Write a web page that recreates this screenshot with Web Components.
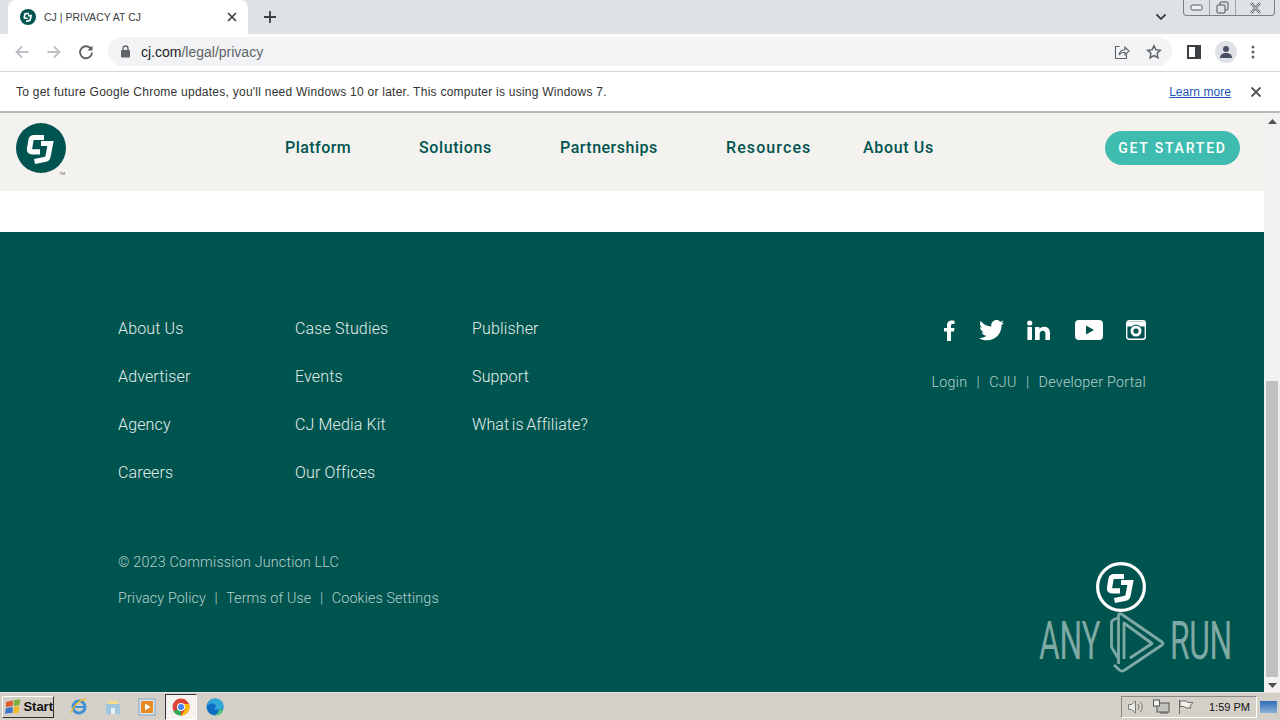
<!DOCTYPE html>
<html lang="en">
<head>
<meta charset="utf-8">
<title>CJ | PRIVACY AT CJ</title>
<style>
html, body { margin: 0; height: 100%; overflow: hidden; }
body { display: flex; flex-direction: column; width: 1280px; height: 720px; font-family: "Roboto", "Liberation Sans", sans-serif; }
.viewport { flex: 1; display: flex; min-height: 0; }
.page { flex: 1; display: flex; flex-direction: column; position: relative; min-width: 0; }
</style>
</head>
<body>
<browser-tabs></browser-tabs>
<browser-toolbar></browser-toolbar>
<update-bar></update-bar>
<div class="viewport">
  <div class="page">
    <cj-header></cj-header>
    <cj-footer></cj-footer>
    <anyrun-mark></anyrun-mark>
  </div>
  <page-scrollbar></page-scrollbar>
</div>
<win-taskbar></win-taskbar>

<script>
const cjGlyph = `<path d="M28 14.500H18Q15.500 14.500 15 17L13.500 26Q13 28.800 16 28.800H24" fill="none" stroke="currentColor" stroke-width="5.200"/>
  <path d="M25 20.500H34.500L32 33.500Q31.500 36 28.500 36.500L18.500 38.500" fill="none" stroke="currentColor" stroke-width="5.200"/>`

customElements.define('cj-logo', class extends HTMLElement {
  constructor() {
    super()
    const mode = this.getAttribute('variant')
    const circle = mode === 'outline'
      ? '<circle cx="25" cy="25" r="23.4" fill="#00544f" stroke="#fff" stroke-width="3.2"/>'
      : '<circle cx="25" cy="25" r="25" fill="#00544f"/>'
    this.attachShadow({ mode: 'open' }).innerHTML = `
      <style>
        :host { display: block; width: var(--size, 50px); height: var(--size, 50px); color: #fff; }
        svg { display: block; width: 100%; height: 100%; }
      </style>
      <svg viewBox="0 0 50 50">${circle}${cjGlyph}</svg>`
  }
})

customElements.define('browser-tabs', class extends HTMLElement {
  constructor() {
    super()
    this.attachShadow({ mode: 'open' }).innerHTML = `
      <style>
        :host { display: flex; height: 34px; background: #dee1e6; align-items: flex-end; font: 10.5px "Liberation Sans", sans-serif; color: #3c4043; position: relative; flex: none; }
        .tab { width: 240px; margin-left: 8px; height: 34px; background: #fff; border-radius: 8px 8px 0 0; display: flex; align-items: center; box-sizing: border-box; padding: 0 10px 0 12px; }
        .tab cj-logo { --size: 16px; margin-right: 8px; }
        .title { flex: 1; }
        .plus { width: 44px; height: 34px; display: grid; place-items: center; }
        .spacer { flex: 1; }
        .chev { width: 38px; height: 34px; display: grid; place-items: center; margin-right: 100px; }
        .win { position: absolute; right: 5px; top: 0; width: 92px; height: 16px; border: 1px solid #7a7f87; border-top: 0; border-radius: 0 0 4px 4px; display: flex; box-sizing: border-box; color: #50555c; }
        .win span { display: grid; place-items: center; border-right: 1px solid #9da1a8; height: 100%; }
        .win span:nth-child(1) { width: 25px; } .win span:nth-child(2) { width: 25px; }
        .win span:nth-child(3) { flex: 1; border: 0; }
      </style>
      <div class="tab">
        <cj-logo></cj-logo>
        <span class="title">CJ | PRIVACY AT CJ</span>
        <svg width="12" height="12" viewBox="0 0 12 12"><path d="M2 2l8 8M10 2l-8 8" stroke="#3c4043" stroke-width="1.7"/></svg>
      </div>
      <div class="plus"><svg width="14" height="14" viewBox="0 0 14 14"><path d="M7 1v12M1 7h12" stroke="#3c4043" stroke-width="1.8"/></svg></div>
      <div class="spacer"></div>
      <div class="chev"><svg width="12" height="8" viewBox="0 0 12 8"><path d="M1.5 1.5L6 6l4.5-4.5" fill="none" stroke="#3c4043" stroke-width="1.8"/></svg></div>
      <div class="win">
        <span><svg width="13" height="7" viewBox="0 0 13 7"><rect x="1" y="1" width="11" height="5" rx="1.5" fill="#eef0f2" stroke="#555"/></svg></span>
        <span><svg width="13" height="13" viewBox="0 0 13 13"><rect x="4" y="1" width="8" height="8" rx="1" fill="none" stroke="#555"/><rect x="1" y="4" width="8" height="8" rx="1" fill="#dee1e6" stroke="#555"/></svg></span>
        <span><svg width="13" height="12" viewBox="0 0 13 12"><path d="M2 1l9 10M11 1L2 11" stroke="#555" stroke-width="2.4"/><path d="M2 1l9 10M11 1L2 11" stroke="#eef0f2" stroke-width="1"/></svg></span>
      </div>`
  }
})

customElements.define('browser-toolbar', class extends HTMLElement {
  constructor() {
    super()
    this.attachShadow({ mode: 'open' }).innerHTML = `
      <style>
        :host { display: flex; align-items: center; height: 38px; box-sizing: border-box; background: #fff; border-bottom: 1px solid #d5d7da; flex: none; padding-bottom: 2px; }
        .nav { display: flex; align-items: center; gap: 16px; padding-left: 14px; width: 108px; box-sizing: border-box; flex: none; }
        .omni { width: 1064px; height: 29px; flex: none; border-radius: 15px; background: #f1f3f4; display: flex; align-items: center; padding: 0 10px 0 12px; box-sizing: border-box; gap: 10px; }
        .url { flex: 1; font: 14px "Liberation Sans", sans-serif; color: #5f6368; }
        .url b { font-weight: normal; color: #202124; }
        .omni-icons { display: flex; gap: 16px; align-items: center; }
        .right { flex: 1; display: flex; align-items: center; gap: 14px; padding-left: 15px; }
        .avatar { width: 22px; height: 22px; border-radius: 50%; background: #dee1e6; display: grid; place-items: center; }
      </style>
      <div class="nav">
        <svg width="16" height="16" viewBox="0 0 16 16"><path d="M14.5 8H2.5M8 2.5L2.5 8 8 13.5" fill="none" stroke="#bcc0c4" stroke-width="1.8"/></svg>
        <svg width="16" height="16" viewBox="0 0 16 16"><path d="M1.5 8h12M8 2.5L13.5 8 8 13.5" fill="none" stroke="#bcc0c4" stroke-width="1.8"/></svg>
        <svg width="16" height="16" viewBox="0 0 16 16"><path d="M13.2 5.2A6 6 0 1 0 14 8.5" fill="none" stroke="#5f6368" stroke-width="1.9"/><path d="M14.5 1.5v5h-5z" fill="#5f6368"/></svg>
      </div>
      <div class="omni">
        <svg width="11" height="13" viewBox="0 0 11 13"><rect x="1" y="5" width="9" height="7.5" rx="1" fill="#5f6368"/><path d="M3 5V3.5a2.5 2.5 0 0 1 5 0V5" fill="none" stroke="#5f6368" stroke-width="1.4"/></svg>
        <span class="url"><b>cj.com</b>/legal/privacy</span>
        <div class="omni-icons">
          <svg width="16" height="16" viewBox="0 0 16 16"><path d="M5.500 2.500H1.500v12h11v-4" fill="none" stroke="#5f6368" stroke-width="1.1"/><path d="M5 11C5.500 7.500 8 5.700 11 5.700V3l4 4-4 4V8.300C8.500 8.300 6.500 9 5 11z" fill="none" stroke="#5f6368" stroke-width="1.1"/></svg>
          <svg width="16" height="16" viewBox="0 0 16 16"><path d="M8 1.800l1.900 4 4.400.5-3.200 3 .8 4.400L8 11.500l-3.900 2.200.8-4.400-3.200-3 4.400-.5z" fill="none" stroke="#5f6368" stroke-width="1.500"/></svg>
        </div>
      </div>
      <div class="right">
        <svg width="14" height="14" viewBox="0 0 14 14"><rect x="1" y="1" width="12" height="12" fill="none" stroke="#3c4043" stroke-width="2"/><rect x="8" y="1" width="5" height="12" fill="#3c4043"/></svg>
        <div class="avatar"><svg width="14" height="14" viewBox="0 0 14 14"><circle cx="7" cy="4" r="3" fill="#4a5068"/><path d="M1 13c0-3.500 2.500-5 6-5s6 1.500 6 5z" fill="#4a5068"/></svg></div>
        <svg width="4" height="14" viewBox="0 0 4 14"><circle cx="2" cy="2" r="1.500" fill="#5f6368"/><circle cx="2" cy="7" r="1.500" fill="#5f6368"/><circle cx="2" cy="12" r="1.500" fill="#5f6368"/></svg>
      </div>`
  }
})

customElements.define('update-bar', class extends HTMLElement {
  constructor() {
    super()
    this.attachShadow({ mode: 'open' }).innerHTML = `
      <style>
        :host { display: flex; align-items: center; height: 41px; box-sizing: border-box; background: #fff; border-bottom: 2px solid #b8b8b4; padding: 0 18px 0 16px; font: 12px "Liberation Sans", sans-serif; color: #333; flex: none; }
        .msg { flex: 1; letter-spacing: 0.25px; }
        a { color: #1a56b8; text-decoration: underline; margin-right: 19px; letter-spacing: 0.05px; }
      </style>
      <span class="msg">To get future Google Chrome updates, you'll need Windows 10 or later. This computer is using Windows 7.</span>
      <a href="#">Learn more</a>
      <svg width="12" height="12" viewBox="0 0 12 12"><path d="M1.500 1.500l9 9M10.500 1.500l-9 9" stroke="#555" stroke-width="1.800"/></svg>`
  }
})

customElements.define('cj-header', class extends HTMLElement {
  constructor() {
    super()
    this.attachShadow({ mode: 'open' }).innerHTML = `
      <style>
        :host { display: block; flex: none; background: #fff; padding-bottom: 41px; }
        .bar { height: 78px; box-sizing: border-box; background: #f4f2ef; display: flex; align-items: flex-start; padding: 10px 24px 0 16px; position: relative; }
        .logo { position: relative; width: 50px; }
        .tm { position: absolute; right: 1px; bottom: -3px; font: 4px "Liberation Sans", sans-serif; color: #555; }
        nav { display: flex; margin-left: 219px; padding-top: 15px; font: 500 16px/20px "Roboto", sans-serif; color: #00544f; letter-spacing: 0.5px; flex: 1; }
        nav span:nth-child(1) { width: 134px; letter-spacing: 0.45px; } nav span:nth-child(2) { width: 141px; letter-spacing: 0.6px; }
        nav span:nth-child(3) { width: 166px; } nav span:nth-child(4) { width: 137px; letter-spacing: 1.1px; }
        nav span:nth-child(5) { letter-spacing: 0.65px; }
        .cta { margin-top: 8px; width: 135px; height: 34px; border-radius: 17px; background: #3fbcb0; color: #fff; font: 500 14px/34px "Roboto", sans-serif; letter-spacing: 1.8px; text-align: center; }
      </style>
      <div class="bar">
        <div class="logo"><cj-logo></cj-logo><span class="tm">TM</span></div>
        <nav><span>Platform</span><span>Solutions</span><span>Partnerships</span><span>Resources</span><span>About Us</span></nav>
        <div class="cta">GET STARTED</div>
      </div>`
  }
})

customElements.define('cj-footer', class extends HTMLElement {
  constructor() {
    super()
    this.attachShadow({ mode: 'open' }).innerHTML = `
      <style>
        :host { display: flex; flex: 1; background: #00544f; color: #e4eeec; font: 300 16px/20px "Roboto", sans-serif; padding: 87px 118px 0; justify-content: space-between; box-sizing: border-box; min-height: 0; }
        .links { display: grid; grid-template-columns: 177px 177px auto; row-gap: 28px; letter-spacing: 0.15px; }
        .tight { word-spacing: -1.5px; letter-spacing: 0.1px; }
        .legal { margin-top: 69px; font-size: 14.3px; letter-spacing: 0.12px; color: #b5d0cc; display: flex; flex-direction: column; gap: 16px; }
        .legal .first { letter-spacing: 0.2px; }
        .sep { margin: 0 5px; }
        .right { display: flex; flex-direction: column; align-items: flex-end; }
        .social { display: flex; align-items: center; gap: 23.5px; height: 24px; color: #fff; margin-top: -1px; }
        .social svg { display: block; fill: currentColor; }
        .sub { margin-top: 30px; font-size: 14.3px; letter-spacing: 0.27px; color: #b5d0cc; }
        .sub .sep { margin: 0 5.5px; }
      </style>
      <div class="left">
        <div class="links">
          <span>About Us</span><span>Case Studies</span><span>Publisher</span>
          <span>Advertiser</span><span>Events</span><span>Support</span>
          <span>Agency</span><span>CJ Media Kit</span><span class="tight">What is Affiliate?</span>
          <span>Careers</span><span>Our Offices</span><span></span>
        </div>
        <div class="legal">
          <span class="first">© 2023 Commission Junction LLC</span>
          <span>Privacy Policy <span class="sep">|</span> Terms of Use <span class="sep">|</span> Cookies Settings</span>
        </div>
      </div>
      <div class="right">
        <div class="social">
          <svg width="11" height="21" viewBox="0 0 11 21"><path d="M3 21V11.500H0V8h3V5.200C3 2 5 .5 7.500 .5c1.300 0 2.500.1 3 .2v3.200H8.700C7.300 3.900 7 4.600 7 5.600V8h3.500L10 11.500H7V21z"/></svg>
          <svg width="25" height="21" viewBox="0 0 25 21"><path d="M25 2.500c-.9.4-1.900.7-2.900.8 1-.6 1.800-1.600 2.200-2.800-1 .6-2.100 1-3.200 1.200A5.100 5.100 0 0 0 12.400 6.400C8.100 6.200 4.300 4.200 1.700.9c-1.400 2.300-.7 5.300 1.600 6.800-.8 0-1.600-.2-2.300-.6 0 2.500 1.800 4.600 4.100 5.100-.8.200-1.500.2-2.300.1.600 2 2.500 3.500 4.800 3.500A10.300 10.300 0 0 1 0 18c2.300 1.500 5 2.300 7.900 2.300 9.500 0 14.900-8 14.600-15.200 1-.7 1.900-1.600 2.500-2.600z"/></svg>
          <svg width="24" height="20" viewBox="0 0 24 20"><circle cx="2.700" cy="3" r="2.600"/><rect x=".4" y="7" width="4.600" height="13"/><path d="M8 7h4.400v1.900C13.200 7.700 14.800 6.700 17 6.700c4.700 0 6 3 6 6.800V20h-4.600v-5.800c0-1.900-.5-3.500-2.500-3.500s-3.200 1.400-3.200 3.600V20H8z"/></svg>
          <svg width="28" height="20" viewBox="0 0 28 20"><path fill-rule="evenodd" d="M4 0h20a4 4 0 0 1 4 4v12a4 4 0 0 1-4 4H4a4 4 0 0 1-4-4V4a4 4 0 0 1 4-4zM11 5.500v9l8-4.500z"/></svg>
          <svg width="20" height="20" viewBox="0 0 20 20"><rect x=".7" y=".7" width="18.600" height="18.600" rx="2.500" fill="none" stroke="currentColor" stroke-width="1.400"/><path d="M1 6.500h4.500a6 6 0 0 1 9 0H19V2.500a1 1 0 0 0-1-1H2.500a1 1 0 0 0-1.500 1z"/><circle cx="10" cy="11" r="5.500"/><circle cx="10" cy="11" r="2.600" fill="#00544f"/></svg>
        </div>
        <div class="sub">Login <span class="sep">|</span> CJU <span class="sep">|</span> Developer Portal</div>
      </div>`
  }
})

customElements.define('anyrun-mark', class extends HTMLElement {
  constructor() {
    super()
    this.attachShadow({ mode: 'open' }).innerHTML = `
      <style>
        :host { position: absolute; left: 1039px; top: 449px; width: 192px; height: 110px; display: block; }
        cj-logo { --size: 50px; position: absolute; left: 57px; top: 0; }
        .row { position: absolute; left: 0; right: 0; top: 48px; height: 62px; display: flex; justify-content: space-between; align-items: center; font: 400 53px/62px "Roboto", sans-serif; color: #7fa9a4; }
        .row span { width: 61px; white-space: nowrap; transform: scaleX(.6); transform-origin: left; display: block; letter-spacing: -0.5px; }
        svg { position: absolute; left: 69px; top: 48px; }
      </style>
      <div class="row"><span>ANY</span><span>RUN</span></div>
      <svg width="58" height="64" viewBox="0 0 58 64" fill="none" stroke="#7fa9a4" stroke-width="2.800" stroke-linejoin="round"><path d="M11 7.500L6 9.500Q3.500 10.500 3.500 13V37L10 48"/><path d="M10.500 54V5.500Q10.500 2.500 14 4.500L54 32Q56 33.500 54 35L16 60.500Q14 62 11.500 60L6 55"/><path d="M16 49V13L44 33.500 22 48"/></svg>
      <cj-logo variant="outline"></cj-logo>`
  }
})

customElements.define('page-scrollbar', class extends HTMLElement {
  constructor() {
    super()
    this.attachShadow({ mode: 'open' }).innerHTML = `
      <style>
        :host { display: flex; flex-direction: column; width: 16px; flex: none; background: #f1f1f1; align-items: center; }
        .arrow { height: 17px; display: grid; place-items: center; flex: none; }
        .space { height: 251px; flex: none; }
        .thumb { height: 296px; width: 12px; background: #c1c1c1; flex: none; }
      </style>
      <div class="arrow"><svg width="9" height="5" viewBox="0 0 9 5"><path d="M4.500 0L9 5H0z" fill="#505050"/></svg></div>
      <div class="space"></div>
      <div class="thumb"></div>
      <div class="arrow"><svg width="9" height="5" viewBox="0 0 9 5"><path d="M4.500 5L9 0H0z" fill="#505050"/></svg></div>`
  }
})

customElements.define('win-taskbar', class extends HTMLElement {
  constructor() {
    super()
    this.attachShadow({ mode: 'open' }).innerHTML = `
      <style>
        :host { display: flex; align-items: center; height: 28px; flex: none; background: #d4d0c8; border-top: 1px solid #e8e6e0; box-sizing: border-box; font: 11px "Liberation Sans", sans-serif; color: #111; }
        .start { margin-left: 2px; width: 52px; height: 22px; box-sizing: border-box; background: #d4d0c8; border: 1px solid; border-color: #fff #333 #333 #fff; display: flex; align-items: center; gap: 2px; padding-left: 2px; font: bold 13px "Liberation Sans", sans-serif; }
        .apps { display: flex; align-items: center; margin-left: 8px; }
        .app { width: 34px; height: 26px; display: grid; place-items: center; box-sizing: border-box; }
        .app.on { background: #f4f3ef; border: 1px solid; border-color: #333 #fff #fff #333; width: 32px; margin: 0 1px; }
        .grow { flex: 1; }
        .tray { display: flex; align-items: center; height: 22px; width: 136px; box-sizing: border-box; border: 1px solid; border-color: #888 #fff #fff #888; padding: 0 0 0 5px; gap: 7px; }
        .clock { margin-left: 7px; white-space: nowrap; }
        .desk { width: 17px; height: 12px; background: linear-gradient(#2c6bb5, #8ab0d8); margin: 0 3px; }
      </style>
      <div class="start">
        <svg width="17" height="16" viewBox="0 0 17 16"><path d="M1 3l7-2v6l-7 1z" fill="#e3572b"/><path d="M9 1l7-1-1 6-6 1z" fill="#7db13c"/><path d="M1 9l7-1v6l-8 1z" fill="#3b78c9"/><path d="M9 8l6-1-1 7-5 1z" fill="#f2b928"/></svg>Start
      </div>
      <div class="apps">
        <div class="app"><svg width="18" height="18" viewBox="0 0 18 18"><circle cx="9" cy="9" r="6" fill="none" stroke="#3d8fd4" stroke-width="3"/><path d="M3 9h12" stroke="#3d8fd4" stroke-width="2"/><path d="M1 15C3 8 9 2 16 1" fill="none" stroke="#e9b93a" stroke-width="1.300"/></svg></div>
        <div class="app"><svg width="18" height="18" viewBox="0 0 18 18"><path d="M4 6V3h10v3z" fill="#f3dc8b"/><path d="M2 6h14v10H2z" fill="#9fc6de"/><rect x="7" y="10" width="4" height="6" fill="#e9eef0"/></svg></div>
        <div class="app"><svg width="18" height="18" viewBox="0 0 18 18"><rect x="1" y="1" width="16" height="16" fill="#dbe6ef" stroke="#7fa3c4"/><rect x="3" y="3" width="12" height="12" fill="#e88a24"/><path d="M7 5.500v7l5.500-3.500z" fill="#fff"/></svg></div>
        <div class="app on"><svg width="18" height="18" viewBox="0 0 18 18"><circle cx="9" cy="9" r="8.500" fill="#dc4437"/><path d="M9 9L1.600 13.200A8.500 8.500 0 0 0 9 17.500z" fill="#34a853"/><path d="M9 9l4.200 2.400L9 17.500A8.500 8.500 0 0 0 17 6H9z" fill="#fbbc05"/><circle cx="9" cy="9" r="4" fill="#fff"/><circle cx="9" cy="9" r="3" fill="#4285f4"/></svg></div>
        <div class="app"><svg width="18" height="18" viewBox="0 0 18 18"><circle cx="9" cy="9" r="8.500" fill="#0f6fc6"/><path d="M1 8C2 3.500 5.500 .5 9.500 .5c4 0 8 3 8 7.500 0 2-2 3.500-4 3.500H8c0-1.500 2-1.500 2-3.500 0-1.500-2-2.500-4-2.500S2 6.500 1 8z" fill="#2fa9d8"/><path d="M13 11.500h3.500c1 0 1 .5 .5 1.500-1 2-2.500 3.500-4.500 4-1.500.3-3 .2-4-.3 2 0 4-2 4.500-5.200z" fill="#4cc47f"/></svg></div>
      </div>
      <div class="grow"></div>
      <div class="tray">
        <svg width="18" height="16" viewBox="0 0 18 16" fill="none" stroke="#7b7b76"><path d="M1.500 5.500h3l4-3.500v12l-4-3.500h-3z" fill="#e9e8e3"/><path d="M11 5q2 3 0 6M13.500 3q3.500 5 0 10"/></svg>
        <svg width="18" height="16" viewBox="0 0 18 16"><rect x="5" y="4" width="12" height="9" fill="#c4c4bf" stroke="#555"/><rect x="1.500" y="1" width="6" height="6" fill="#f3f3ee" stroke="#555"/><path d="M8 14h8" stroke="#555"/></svg>
        <svg width="18" height="16" viewBox="0 0 18 16" fill="none" stroke="#6d6d69"><path d="M2.500 1v14"/><path d="M3 2h6l2 1.500h5l-3 3.500 1 2H9L7 7.500H3z" fill="#efefea"/></svg>
        <span class="clock">1:59 PM</span>
      </div>
      <div class="desk"></div>`
  }
})
</script>
</body>
</html>
